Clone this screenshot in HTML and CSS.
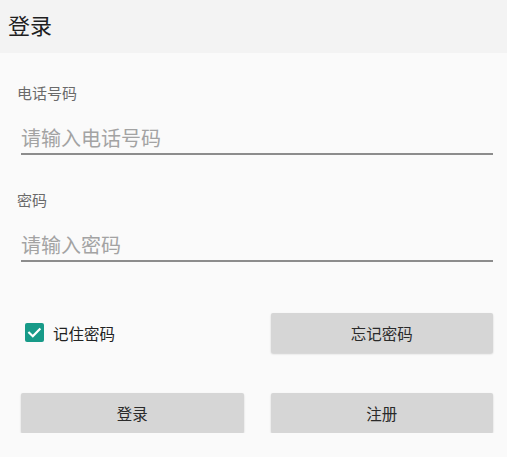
FILE: index.html
```html
<!DOCTYPE html>
<html lang="zh">
<head>
<meta charset="utf-8">
<title>登录</title>
<link rel="stylesheet" href="styles.css">
</head>
<body>
<header class="appbar"><h1 class="appbar-title">登录</h1></header>
<main class="form">
  <label class="field-label" for="phone">电话号码</label>
  <input class="field-input" id="phone" type="text" placeholder="请输入电话号码">
  <label class="field-label second" for="pwd">密码</label>
  <input class="field-input" id="pwd" type="password" placeholder="请输入密码">
  <div class="row row-first">
    <label class="remember">
      <svg class="check" width="19" height="19" viewBox="0 0 19 19" aria-hidden="true">
        <rect x="0" y="0" width="19" height="19" rx="2" fill="#179a88"/>
        <path d="M4.2 9.8 L7.8 13.2 L14.6 6.2" fill="none" stroke="#ffffff" stroke-width="2.2" stroke-linecap="square"/>
      </svg>
      <span class="remember-text">记住密码</span>
    </label>
    <button class="btn" type="button">忘记密码</button>
  </div>
  <div class="row row-second">
    <button class="btn" type="button">登录</button>
    <button class="btn" type="button">注册</button>
  </div>
</main>
</body>
</html>
```

FILE: styles.css
```css
html, body {
  margin: 0;
  padding: 0;
  background: #fafafa;
  font-family: "Noto Sans CJK SC", "Noto Sans", sans-serif;
}

.appbar {
  height: 53px;
  background: #f3f3f3;
  box-sizing: border-box;
  padding: 11px 0 0 8px;
}

.appbar-title {
  margin: 0;
  font-size: 22px;
  line-height: 26px;
  font-weight: 400;
  color: #1f1f1f;
}

.form {
  padding: 30px 14px 0 21px;
  display: flex;
  flex-direction: column;
}

.field-label {
  display: block;
  font-size: 15px;
  line-height: 20px;
  color: #6a6a6a;
  margin-left: -4px;
}

.field-label.second {
  margin-top: 35px;
}

.field-input {
  display: block;
  width: 100%;
  box-sizing: content-box;
  height: 26px;
  margin: 0;
  padding: 22px 0 2px 0;
  border: none;
  border-bottom: 2px solid #8c8c8c;
  background: transparent;
  font-family: inherit;
  font-size: 20px;
  line-height: 26px;
  color: #333;
  outline: none;
}

.field-input::placeholder {
  color: #a3a3a3;
}

.row {
  display: grid;
  grid-template-columns: 1fr 1fr;
  column-gap: 27px;
  align-items: center;
}

.row-first {
  margin-top: 51px;
}

.row-second {
  margin-top: 40px;
}

.remember {
  display: flex;
  align-items: center;
  gap: 9px;
  padding-left: 4px;
  margin-top: -1px;
}

.check {
  display: block;
  flex: none;
}

.remember-text {
  font-size: 15.5px;
  line-height: 20px;
  color: #222;
}

.btn {
  height: 40px;
  border: none;
  border-radius: 2px;
  background: #d6d6d6;
  box-shadow: 0 1px 2px rgba(0, 0, 0, 0.18);
  font-family: inherit;
  font-size: 15.5px;
  color: #2a2a2a;
  padding: 0;
}
```
